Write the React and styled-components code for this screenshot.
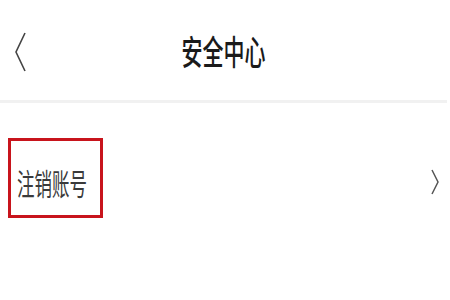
import styled, { createGlobalStyle } from 'styled-components'

const GlobalStyle = createGlobalStyle`
    html, body {
        margin: 0;
        padding: 0;
        background: #ffffff;
    }
    body {
        font-family: "Noto Sans CJK SC", "Noto Sans", sans-serif;
        width: 450px;
        height: 300px;
        overflow: hidden;
    }
`

const Page = styled.div`
    width: 450px;
    height: 300px;
    background: #ffffff;
`

const Header = styled.div`
    height: 100px;
    display: grid;
    grid-template-columns: 60px 1fr 60px;
    align-items: center;
    border-bottom: 3px solid #f1f1f1;
    margin-right: 3px;
`

const BackButton = styled.div`
    display: flex;
    align-items: center;
    padding-left: 14px;
    padding-top: 4px;
`

const Title = styled.div`
    justify-self: center;
    font-size: 21px;
    font-weight: 500;
    color: #1a1a1a;
    transform: scaleY(1.65);
`

const Row = styled.div`
    display: flex;
    align-items: center;
    justify-content: space-between;
    padding: 35px 10px 0 8px;
`

const Highlight = styled.div`
    width: 83px;
    height: 74px;
    border: 3px solid #c8141c;
    display: flex;
    align-items: center;
    padding-left: 6px;
`

const Label = styled.span`
    display: inline-block;
    font-size: 17.5px;
    color: #3a3a3a;
    transform: scaleY(1.7);
    padding-top: 4px;
    white-space: nowrap;
`

const Arrow = styled.div`
    display: flex;
    align-items: center;
    margin-top: 8px;
`

const App = () => {
    return (
        <Page>
            <GlobalStyle />
            <Header>
                <BackButton>
                    <svg width="13" height="42" viewBox="0 0 13 42">
                        <path d="M11 2 L2 21 L11 40" fill="none" stroke="#444" strokeWidth="1.6" />
                    </svg>
                </BackButton>
                <Title>安全中心</Title>
                <div />
            </Header>
            <Row>
                <Highlight>
                    <Label>注销账号</Label>
                </Highlight>
                <Arrow>
                    <svg width="10" height="26" viewBox="0 0 10 26">
                        <path d="M2 1 L8 13 L2 25" fill="none" stroke="#555" strokeWidth="1.5" />
                    </svg>
                </Arrow>
            </Row>
        </Page>
    )
}

export default App
